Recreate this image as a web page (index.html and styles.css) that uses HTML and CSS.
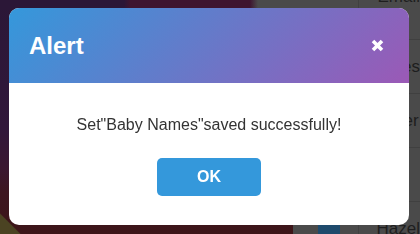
FILE: index.html
```html
<!DOCTYPE html>
<html lang="en">
<head>
<meta charset="utf-8">
<title>Alert</title>
<link rel="stylesheet" href="styles.css">
</head>
<body>
<div class="page">
  <div class="hero"></div>
  <div class="table">
    <div class="row head"><div class="cell act"></div><div class="cell name">Email</div></div>
    <div class="row"><div class="cell act"></div><div class="cell name">James</div></div>
    <div class="row"><div class="cell act"></div><div class="cell name">Peter</div></div>
    <div class="row"><div class="cell act"></div><div class="cell name">Ava</div></div>
    <div class="row"><div class="cell act"><span class="btn-dim"></span></div><div class="cell name">Hazel</div></div>
  </div>
</div>

<div class="modal" role="dialog" aria-labelledby="alert-title">
  <div class="modal-header">
    <h2 id="alert-title" class="modal-title">Alert</h2>
    <button class="close" aria-label="Close">
      <svg width="13" height="13" viewBox="0 0 13 13" aria-hidden="true">
        <path d="M2 2 L11 11 M11 2 L2 11" stroke="#fff" stroke-width="3.6" stroke-linecap="butt" fill="none"/>
      </svg>
    </button>
  </div>
  <div class="modal-body">
    <p class="message">Set"Baby Names"saved successfully!</p>
    <button class="ok">OK</button>
  </div>
</div>
</body>
</html>
```

FILE: styles.css
```css
html, body {
  margin: 0;
  padding: 0;
}
body {
  width: 420px;
  height: 234px;
  overflow: hidden;
  font-family: "Liberation Sans", Arial, sans-serif;
  background: #2b1737;
}
.page {
  display: flex;
  height: 234px;
  overflow: hidden;
}
.hero {
  width: 293px;
  flex: none;
  background:
    linear-gradient(to right, #2b1737 0, #2b1737 124px, #3e1530 130px, #3e1530 250px, #4a4a4a 258px) top / 100% 10px no-repeat,
    linear-gradient(45deg, #4b4322 0, #4b4322 14px, transparent 15px) left bottom / 30px 30px no-repeat,
    linear-gradient(to bottom, #2b1737 0%, #31173a 55%, #3a1730 72%, #3d1620 82%, #3d1518 100%);
}
.table {
  flex: 1;
  background: #4a4a4a;
  display: flex;
  flex-direction: column;
  overflow: hidden;
}
.row {
  display: flex;
  height: 54px;
  flex: none;
  border-bottom: 1px solid #404040;
  box-sizing: border-box;
}
.row.head {
  height: 40px;
}
.cell {
  display: flex;
  align-items: center;
}
.act {
  width: 67px;
  border-right: 1px solid #404040;
  box-sizing: border-box;
  padding-left: 25px;
}
.name {
  padding-left: 18px;
  font-size: 17px;
  color: #1e1e1e;
  white-space: nowrap;
}
.head .name {
  align-items: flex-start;
  margin-top: -13px;
}
.btn-dim {
  width: 22px;
  height: 26px;
  background: #1e4a6c;
  border-radius: 4px;
}

.modal {
  position: fixed;
  left: 9px;
  top: 8px;
  width: 400px;
  height: 217px;
  background: #fff;
  border-radius: 10px;
  overflow: hidden;
  display: flex;
  flex-direction: column;
}
.modal-header {
  height: 75px;
  flex: none;
  display: flex;
  align-items: center;
  justify-content: space-between;
  padding: 0 25px 0 20px;
  background: linear-gradient(135deg, #3498db 0%, #9b59b6 100%);
}
.modal-title {
  margin: 0;
  font-size: 24px;
  font-weight: bold;
  color: #fff;
  line-height: 28px;
}
.close {
  border: 0;
  background: none;
  padding: 0;
  width: 13px;
  height: 13px;
  display: flex;
  cursor: pointer;
}
.modal-body {
  flex: 1;
  display: flex;
  flex-direction: column;
  align-items: center;
  padding: 30px 20px 0;
}
.message {
  margin: 0;
  font-size: 16px;
  line-height: 24px;
  color: #333;
}
.ok {
  margin-top: 21px;
  width: 104px;
  height: 38px;
  border: 0;
  border-radius: 5px;
  background: #3498db;
  color: #fff;
  font-family: "Liberation Sans", Arial, sans-serif;
  font-size: 16px;
  font-weight: bold;
  cursor: pointer;
}
```
